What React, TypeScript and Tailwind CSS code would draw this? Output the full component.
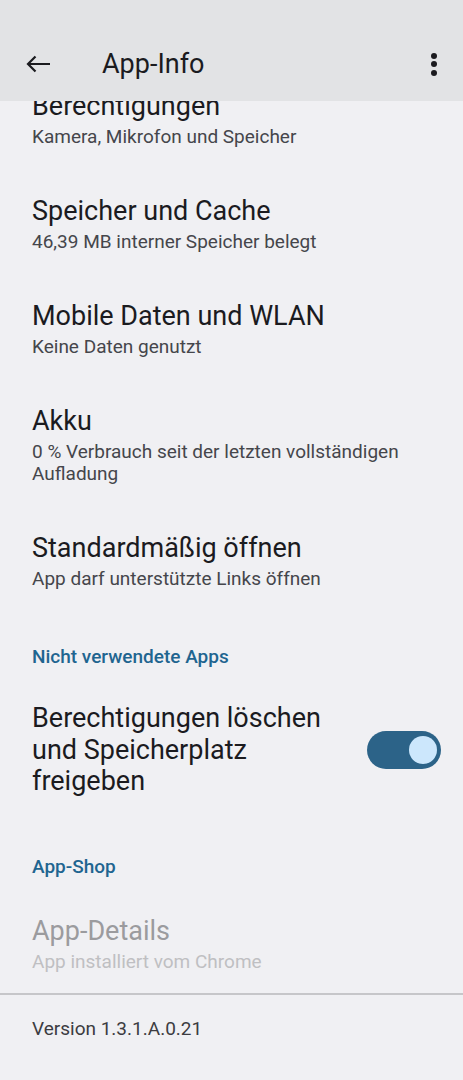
import React from "react";

const items = [
  { title: "Berechtigungen", sub: "Kamera, Mikrofon und Speicher" },
  { title: "Speicher und Cache", sub: "46,39 MB interner Speicher belegt" },
  { title: "Mobile Daten und WLAN", sub: "Keine Daten genutzt" },
  { title: "Akku", sub: "0 % Verbrauch seit der letzten vollständigen Aufladung" },
  { title: "Standardmäßig öffnen", sub: "App darf unterstützte Links öffnen" },
];

function Item({ title, sub, disabled }: { title: string; sub: string; disabled?: boolean }) {
  return (
    <div className="px-8 py-6">
      <div className={"text-[27px] leading-[30px] " + (disabled ? "text-[#9b9b9e]" : "text-[#1b1b1f]")}>{title}</div>
      <div className={"mt-[5px] text-[19px] leading-[22px] pr-6 " + (disabled ? "text-[#bfbfc2]" : "text-[#45464b]")}>{sub}</div>
    </div>
  );
}

function Section({ label, top }: { label: string; top: string }) {
  return (
    <div className={"px-8 pb-[11px] text-[19px] leading-[22px] font-medium text-[#1f6590] " + top}>{label}</div>
  );
}

export default function App() {
  return (
    <div className="h-[1080px] w-[463px] overflow-hidden bg-[#f0f0f3] font-['Roboto',sans-serif]">
      <div className="relative z-10 flex h-[101px] items-end bg-[#e2e3e5] pb-[17px]">
        <div className="flex h-[40px] w-full items-center">
          <svg className="ml-[25px]" width="26" height="20" viewBox="0 0 26 20">
            <path d="M3 10H25M10.5 2.5L3 10L10.5 17.5" fill="none" stroke="#1b1b1f" strokeWidth="2.2" />
          </svg>
          <div className="ml-[51px] text-[27px] text-[#1b1b1f]">App-Info</div>
          <div className="ml-auto mr-[26px] flex flex-col gap-[2.5px]">
            <span className="h-[6px] w-[6px] rounded-full bg-[#1b1b1f]" />
            <span className="h-[6px] w-[6px] rounded-full bg-[#1b1b1f]" />
            <span className="h-[6px] w-[6px] rounded-full bg-[#1b1b1f]" />
          </div>
        </div>
      </div>
      <div className="-mt-[34px]">
        {items.map((it) => (
          <Item key={it.title} title={it.title} sub={it.sub} />
        ))}
        <Section label="Nicht verwendete Apps" top="pt-[32px]" />
        <div className="flex items-center px-8 py-6">
          <div className="flex-1 text-[27px] leading-[31.5px] text-[#1b1b1f]">
            Berechtigungen löschen
            <br />
            und Speicherplatz
            <br />
            freigeben
          </div>
          <div className="mr-[-10px] flex h-[38px] w-[74px] items-center justify-end rounded-full bg-[#2c6388] pr-[4px]">
            <span className="h-[28px] w-[28px] rounded-full bg-[#cce7fc]" />
          </div>
        </div>
        <Section label="App-Shop" top="pt-[34px]" />
        <div className="pt-[3px]">
          <Item title="App-Details" sub="App installiert vom Chrome" disabled />
        </div>
        <div className="-mt-[4px] h-[2px] bg-[#c6c6c9]" />
        <div className="px-8 pt-[23px] text-[19px] leading-[22px] text-[#3c3c41]">Version 1.3.1.A.0.21</div>
      </div>
    </div>
  );
}
